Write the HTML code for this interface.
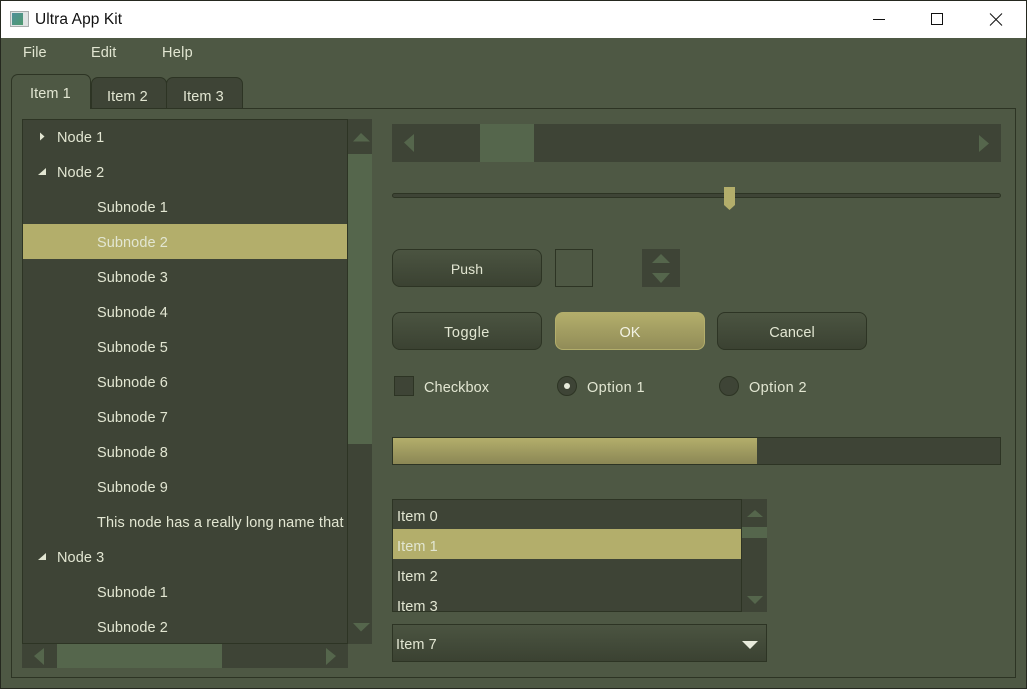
<!DOCTYPE html>
<html><head><meta charset="utf-8"><style>
html,body{margin:0;padding:0;width:1027px;height:689px;overflow:hidden;background:#4e5844}
div,span,svg{position:absolute;box-sizing:border-box}
.t{font:14.5px/20px "Liberation Sans",sans-serif;color:#e2e6d2;white-space:nowrap;margin-top:1px;letter-spacing:.08px}
.btn{background:linear-gradient(#4b5441,#3b4232);border:1px solid #2d3424;border-radius:8px}
.dk{background:#3e4436}
.th{background:#55664c}
svg{overflow:visible}
</style></head><body>
<div style="left:0;top:0;width:1027px;height:689px;border:1px solid #25281f"></div>
<div style="left:1px;top:1px;width:1025px;height:37px;background:#fff"></div>
<div style="left:10px;top:11px;width:19px;height:16px;background:#dfe3e3;border:1px solid #a9adad"></div>
<div style="left:12px;top:13px;width:11px;height:12px;background:linear-gradient(135deg,#4f8f9a,#4f9a6f)"></div>
<div class="t" style="left:35px;top:10px;color:#111;font-size:15.5px;margin-top:0">Ultra App Kit</div>
<svg style="left:0;top:0" width="1027" height="40" fill="none" stroke="#111" stroke-width="1">
<path d="M873 19.5H885"/><rect x="931.5" y="13.5" width="11" height="11"/><path d="M990 13.5L1002 25.5M1002 13.5L990 25.5"/></svg>

<div class="t" style="left:23px;top:42px">File</div>
<div class="t" style="left:91px;top:42px">Edit</div>
<div class="t" style="left:162px;top:42px;letter-spacing:.3px">Help</div>

<div style="left:11px;top:108px;width:1005px;height:570px;border:1px solid #2d3424"></div>
<div class="dk" style="left:91px;top:77px;width:76px;height:32px;border:1px solid #2d3424;border-radius:7px 7px 0 0"></div>
<div class="dk" style="left:166px;top:77px;width:77px;height:32px;border:1px solid #2d3424;border-radius:7px 7px 0 0"></div>
<div style="left:11px;top:74px;width:80px;height:35px;background:#4e5844;border:1px solid #2d3424;border-bottom:0;border-radius:7px 7px 0 0"></div>
<div class="t" style="left:30px;top:83px">Item 1</div>
<div class="t" style="left:107px;top:86px">Item 2</div>
<div class="t" style="left:183px;top:86px">Item 3</div>

<!-- tree -->
<div class="dk" style="left:22px;top:119px;width:326px;height:525px;border:1px solid #2d3424;overflow:hidden"></div>
<div style="left:23px;top:224px;width:324px;height:35px;background:#b3ae6b"></div>
<svg style="left:0;top:0" width="60" height="600" fill="#e2e6d2"><path d="M40 132.500L44.500 136.500L40 140.500Z"/><path d="M38 175H46V168Z"/><path d="M38 560H46V553Z"/></svg>
<div class="t" style="left:57px;top:127px">Node 1</div>
<div class="t" style="left:57px;top:162px">Node 2</div>
<div class="t" style="left:97px;top:197px">Subnode 1</div>
<div class="t" style="left:97px;top:232px">Subnode 2</div>
<div class="t" style="left:97px;top:267px">Subnode 3</div>
<div class="t" style="left:97px;top:302px">Subnode 4</div>
<div class="t" style="left:97px;top:337px">Subnode 5</div>
<div class="t" style="left:97px;top:372px">Subnode 6</div>
<div class="t" style="left:97px;top:407px">Subnode 7</div>
<div class="t" style="left:97px;top:442px">Subnode 8</div>
<div class="t" style="left:97px;top:477px">Subnode 9</div>
<div class="t" style="left:97px;top:512px;letter-spacing:.13px">This node has a really long name that</div>
<div class="t" style="left:57px;top:547px">Node 3</div>
<div class="t" style="left:97px;top:582px">Subnode 1</div>
<div class="t" style="left:97px;top:617px">Subnode 2</div>

<!-- tree scrollbars -->
<div class="dk" style="left:348px;top:119px;width:24px;height:525px"></div>
<div class="th" style="left:348px;top:154px;width:24px;height:290px"></div>
<div class="dk" style="left:22px;top:644px;width:326px;height:24px"></div>
<div class="th" style="left:57px;top:644px;width:165px;height:24px"></div>

<!-- h scroll -->
<div class="dk" style="left:392px;top:124px;width:609px;height:38px"></div>
<div class="th" style="left:480px;top:124px;width:54px;height:38px"></div>

<!-- slider -->
<div class="dk" style="left:392px;top:193px;width:609px;height:5px;border:1px solid #2d3424;border-radius:3px"></div>
<svg style="left:0;top:0" width="1027" height="689"><path d="M724 187H735V205L729.500 210L724 205Z" fill="#b3ae6b"/></svg>

<!-- buttons -->
<div class="btn" style="left:392px;top:249px;width:150px;height:38px"></div>
<div class="t" style="left:392px;top:258px;width:150px;text-align:center;font-size:14px">Push</div>
<div style="left:555px;top:249px;width:38px;height:38px;border:1px solid #2d3424"></div>
<div class="dk" style="left:642px;top:249px;width:38px;height:38px"></div>
<div class="btn" style="left:392px;top:312px;width:150px;height:38px"></div>
<div class="t" style="left:392px;top:322px;width:150px;text-align:center;letter-spacing:.5px">Toggle</div>
<div style="left:555px;top:312px;width:150px;height:38px;background:linear-gradient(#b3ae6b,#918c58);border:1px solid #b3ae6b;border-radius:8px"></div>
<div class="t" style="left:555px;top:322px;width:150px;text-align:center;color:#f2f2e4">OK</div>
<div class="btn" style="left:717px;top:312px;width:150px;height:38px"></div>
<div class="t" style="left:717px;top:322px;width:150px;text-align:center">Cancel</div>

<!-- check / radio -->
<div class="dk" style="left:394px;top:376px;width:20px;height:20px;border:1px solid #2d3424"></div>
<div class="t" style="left:424px;top:377px">Checkbox</div>
<div class="dk" style="left:557px;top:376px;width:20px;height:20px;border:1px solid #2d3424;border-radius:50%"></div>
<div style="left:564px;top:383px;width:6px;height:6px;border-radius:50%;background:#e8ebdc"></div>
<div class="t" style="left:587px;top:377px;letter-spacing:.4px">Option 1</div>
<div class="dk" style="left:719px;top:376px;width:20px;height:20px;border:1px solid #2d3424;border-radius:50%"></div>
<div class="t" style="left:749px;top:377px;letter-spacing:.4px">Option 2</div>

<!-- progress -->
<div class="dk" style="left:392px;top:437px;width:609px;height:28px;border:1px solid #2d3424"></div>
<div style="left:393px;top:438px;width:364px;height:26px;background:linear-gradient(#b3ae6b,#8b8755)"></div>

<!-- list -->
<div class="dk" style="left:392px;top:499px;width:350px;height:113px;border:1px solid #2d3424"></div>
<div style="left:393px;top:529px;width:348px;height:30px;background:#b3ae6b"></div>
<div class="t" style="left:397px;top:506px">Item 0</div>
<div class="t" style="left:397px;top:536px">Item 1</div>
<div class="t" style="left:397px;top:566px">Item 2</div>
<div style="left:393px;top:590px;width:348px;height:21px;overflow:hidden"><div class="t" style="left:4px;top:6px">Item 3</div></div>
<div class="dk" style="left:742px;top:499px;width:25px;height:113px"></div>
<div class="th" style="left:742px;top:527px;width:25px;height:11px"></div>

<!-- combo -->
<div style="left:392px;top:624px;width:375px;height:38px;background:linear-gradient(#4b5441,#3b4232);border:1px solid #2d3424"></div>
<div class="t" style="left:396px;top:634px">Item 7</div>
<svg style="left:0;top:0" width="1027" height="689"><path d="M742 641H758L750 649Z" fill="#e8ebdc"/></svg>

<!-- arrows -->
<svg style="left:0;top:0" width="1027" height="689" fill="#55664c">
<path d="M353 141.500L361 133L370 141.500Z"/><path d="M353 623L361 631.500L370 623Z"/>
<path d="M44 648L34 656L44 665Z"/><path d="M326 648L336 656L326 665Z"/>
<path d="M414 134L404 142.500L414 152Z"/><path d="M979 135L989 143.500L979 152Z"/>
<path d="M652 263L661 254L670 263Z"/><path d="M652 273L661 283L670 273Z"/>
<path d="M747 517L755 510L763 517Z"/><path d="M747 596L755 604L763 596Z"/>
</svg>
</body></html>
